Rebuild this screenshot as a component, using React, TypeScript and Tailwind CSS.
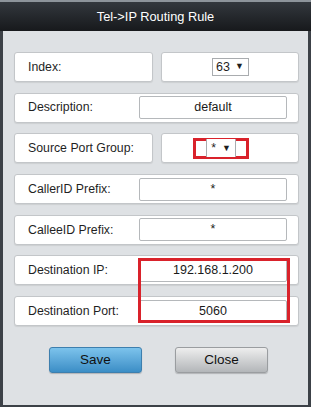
import React from "react";

const box =
  "h-[30px] bg-white border border-[#c3c6c9] rounded-[3px] shadow-[0_1px_1px_rgba(0,0,0,0.08)] flex items-center";

const inputCls =
  "w-[148px] h-[23px] bg-white border border-[#b5b8bb] rounded-[2px] text-center text-[12.5px] text-[#1a1a1a] flex items-center justify-center";

function SplitRow({ label, children }: { label: string; children: React.ReactNode }) {
  return (
    <div className="flex gap-[8px]">
      <div className={`${box} w-[139px] pl-[13px]`}>
        <span>{label}</span>
      </div>
      <div className={`${box} w-[138px] justify-center`}>{children}</div>
    </div>
  );
}

function FullRow({ label, value }: { label: string; value: string }) {
  return (
    <div className={`${box} w-[285px] pl-[13px] pr-[11px] justify-between`}>
      <span>{label}</span>
      <div className={inputCls}>{value}</div>
    </div>
  );
}

export default function App() {
  return (
    <div
      className="w-[312px] h-[409px] bg-white text-[12.3px] text-[#1f1f1f]"
      style={{ fontFamily: '"Liberation Sans", Arial, sans-serif' }}
    >
      <div className="w-[311px] h-[407px] bg-[#3c4147] border-t-2 border-[#8d949b] flex flex-col">
        <div className="h-[29px] bg-gradient-to-b from-[#33383e] to-[#17191c] flex items-center justify-center text-white text-[12.8px]">
          Tel-&gt;IP Routing Rule
        </div>
        <div className="mx-[3px] mb-[2px] flex-1 bg-[#dee1e4] pl-[11px] pt-[21px] flex flex-col">
          <div className="relative flex flex-col gap-[10.7px]">
            <SplitRow label="Index:">
              <div className="h-[18px] w-[37px] border border-[#a9acaf] bg-white flex items-center justify-center gap-[5px] text-[12.5px]">
                <span>63</span>
                <span className="text-[9px]">▼</span>
              </div>
            </SplitRow>
            <FullRow label="Description:" value="default" />
            <SplitRow label="Source Port Group:">
              <div className="h-[21px] w-[56px] border-[3px] border-[#d9222b] flex items-center justify-center ml-[-18px]">
                <div className="h-[18px] w-[30px] border-x border-[#a9acaf] bg-white flex items-center justify-center gap-[6px]">
                  <span>*</span>
                  <span className="text-[9px]">▼</span>
                </div>
              </div>
            </SplitRow>
            <FullRow label="CallerID Prefix:" value="*" />
            <FullRow label="CalleeID Prefix:" value="*" />
            <FullRow label="Destination IP:" value="192.168.1.200" />
            <FullRow label="Destination Port:" value="5060" />
            <div className="absolute left-[124px] top-[206px] w-[152px] h-[65px] border-[3px] border-[#d9222b] pointer-events-none" />
          </div>
          <div className="flex pl-[35px] gap-[33px] mt-[21px]">
            <button className="w-[93px] h-[26px] rounded-[3px] border border-[#3d7fae] bg-gradient-to-b from-[#7cc3ec] to-[#3b8ec6] text-[13.5px] text-[#111] shadow-[0_1px_1px_rgba(0,0,0,0.2)]">
              Save
            </button>
            <button className="w-[93px] h-[26px] rounded-[3px] border border-[#9a9da0] bg-gradient-to-b from-[#eeeeee] to-[#b3b6b9] text-[13.5px] text-[#111] shadow-[0_1px_1px_rgba(0,0,0,0.2)]">
              Close
            </button>
          </div>
        </div>
      </div>
    </div>
  );
}
